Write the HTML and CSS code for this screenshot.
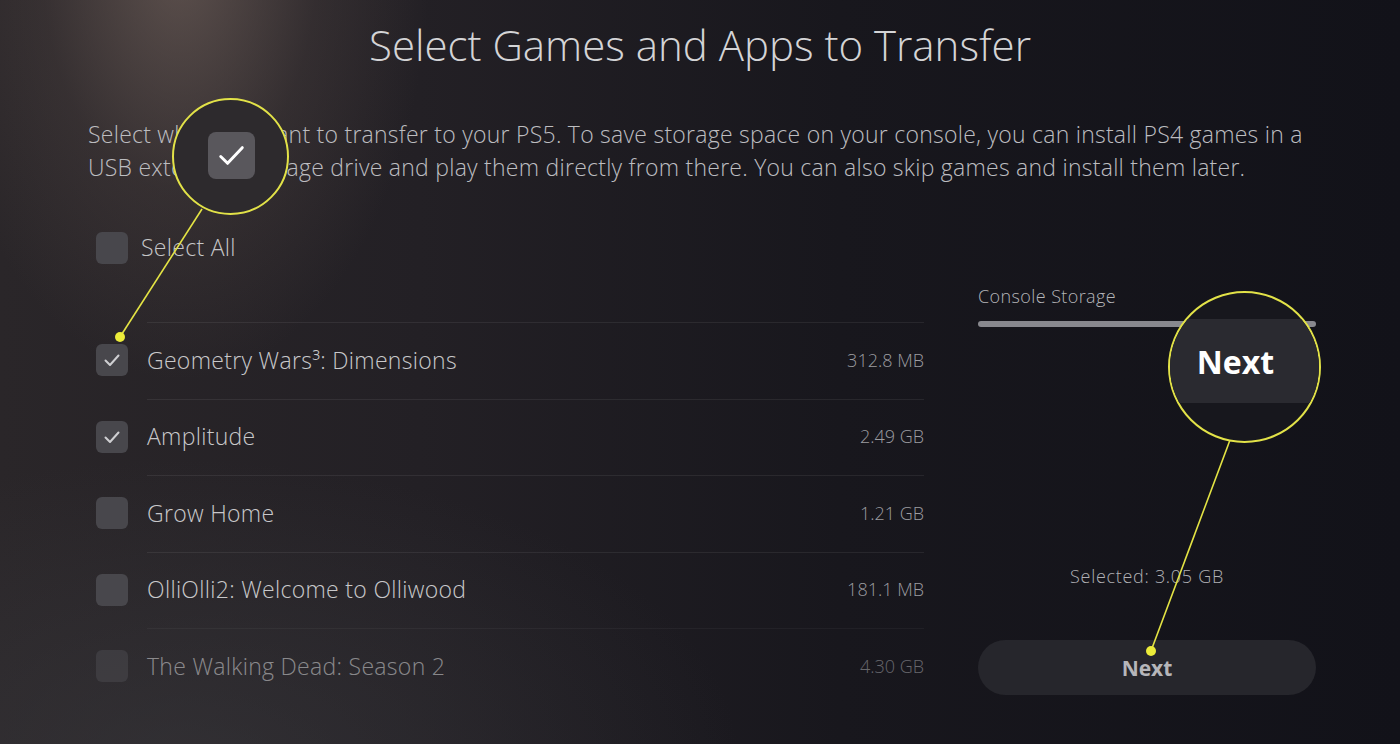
FILE: index.html
```html
<!DOCTYPE html>
<html lang="en">
<head>
    <meta charset="UTF-8">
    <title>Select Games and Apps to Transfer</title>
    <link rel="stylesheet" href="styles.css">
</head>
<body>
    <div class="screen">
        <h1 class="title">Select Games and Apps to Transfer</h1>
        <p class="intro">Select what you want to transfer to your PS5. To save storage space on your console, you can install PS4 games in a<br>USB extended storage drive and play them directly from there. You can also skip games and install them later.</p>

        <div class="content">
            <div class="games">
                <div class="select-all">
                    <span class="box"></span>
                    <span>Select All</span>
                </div>

                <ul class="game-list">
                    <li class="game">
                        <span class="box"><svg viewBox="0 0 32 32"><polyline points="9.5,16.5 14,21 22.5,11.5"/></svg></span>
                        <div class="game-body">
                            <span class="name">Geometry Wars³: Dimensions</span>
                            <span class="size">312.8 MB</span>
                        </div>
                    </li>
                    <li class="game">
                        <span class="box"><svg viewBox="0 0 32 32"><polyline points="9.5,16.5 14,21 22.5,11.5"/></svg></span>
                        <div class="game-body">
                            <span class="name">Amplitude</span>
                            <span class="size">2.49 GB</span>
                        </div>
                    </li>
                    <li class="game">
                        <span class="box"></span>
                        <div class="game-body">
                            <span class="name">Grow Home</span>
                            <span class="size">1.21 GB</span>
                        </div>
                    </li>
                    <li class="game">
                        <span class="box"></span>
                        <div class="game-body">
                            <span class="name">OlliOlli2: Welcome to Olliwood</span>
                            <span class="size">181.1 MB</span>
                        </div>
                    </li>
                    <li class="game faded">
                        <span class="box"></span>
                        <div class="game-body">
                            <span class="name">The Walking Dead: Season 2</span>
                            <span class="size">4.30 GB</span>
                        </div>
                    </li>
                </ul>
            </div>

            <aside class="storage">
                <div class="storage-label">Console Storage</div>
                <div class="storage-bar"></div>
                <div class="selected">Selected: 3.05 GB</div>
                <button class="next-btn">Next</button>
            </aside>
        </div>

        <!-- callout pointers -->
        <svg class="pointers" viewBox="0 0 1400 744">
            <line x1="202" y1="209" x2="120" y2="337"/>
            <circle cx="120" cy="337" r="5"/>
            <line x1="1230" y1="440" x2="1151" y2="651"/>
            <circle cx="1151" cy="651" r="5"/>
        </svg>

        <div class="callout callout-check">
            <span class="big-box"><svg viewBox="0 0 48 48"><polyline points="13,25 20,32 35,16"/></svg></span>
        </div>

        <div class="callout callout-next">
            <div class="big-btn">Next</div>
        </div>
    </div>
</body>
</html>
```

FILE: styles.css
```css
* {
    margin: 0;
    padding: 0;
    box-sizing: border-box;
}

body {
    background: #141419;
    font-family: 'Open Sans', 'Liberation Sans', sans-serif;
    overflow: hidden;
}

.screen {
    width: 1400px;
    height: 744px;
    position: relative;
    overflow: hidden;
    color: #c4c4c6;
    background:
        radial-gradient(ellipse 250px 420px at 180px -40px, rgba(128, 110, 102, 0.6), rgba(96, 82, 78, 0.25) 55%, rgba(0, 0, 0, 0) 100%),
        radial-gradient(ellipse 560px 300px at 180px 760px, rgba(62, 62, 66, 0.45), rgba(0, 0, 0, 0) 100%),
        linear-gradient(90deg, #2a2629 0%, #232025 30%, #18171d 60%, #121219 100%);
}

.title {
    padding-top: 21px;
    text-align: center;
    font-size: 42px;
    line-height: 48px;
    font-weight: 300;
    color: #d4d4d6;
}

.intro {
    margin: 49px 0 0 88px;
    font-size: 23px;
    line-height: 33px;
    font-weight: 300;
    letter-spacing: 0.25px;
    color: #bdbdc0;
    white-space: nowrap;
}

.content {
    display: grid;
    grid-template-columns: 828px 338px;
    column-gap: 54px;
    padding-left: 96px;
    margin-top: 48px;
}

.box {
    width: 32px;
    height: 32px;
    flex: none;
    border-radius: 6px;
    background: #48474c;
    display: flex;
}

.box svg {
    width: 32px;
    height: 32px;
    fill: none;
    stroke: #cfcfd2;
    stroke-width: 2;
    stroke-linecap: round;
    stroke-linejoin: round;
}

.select-all {
    display: flex;
    align-items: center;
    gap: 13px;
    height: 32px;
    padding-bottom: 3px;
    font-size: 23px;
    font-weight: 300;
    letter-spacing: 0.3px;
    color: #c6c6c8;
}

.select-all .box {
    margin-top: 3px;
}

.game-list {
    list-style: none;
    margin-top: 58px;
}

.game {
    display: flex;
    align-items: center;
    gap: 19px;
}

.game-body {
    flex: 1;
    height: 76.5px;
    padding-bottom: 2px;
    border-top: 1px solid rgba(255, 255, 255, 0.07);
    display: flex;
    align-items: center;
    justify-content: space-between;
}

.name {
    font-size: 23px;
    font-weight: 300;
    letter-spacing: 0.3px;
    color: #c8c8ca;
}

.size {
    font-size: 18px;
    font-weight: 300;
    color: #9c9ca0;
}

.faded {
    opacity: 0.6;
}

.storage {
    display: flex;
    flex-direction: column;
}

.storage-label {
    margin-top: 52px;
    font-size: 18px;
    line-height: 24px;
    font-weight: 300;
    letter-spacing: 0.4px;
    color: #b4b4b8;
}

.storage-bar {
    margin-top: 13px;
    height: 6px;
    border-radius: 3px;
    background: #88888e;
}

.selected {
    margin-top: 237px;
    text-align: center;
    font-size: 18px;
    line-height: 24px;
    font-weight: 300;
    letter-spacing: 0.7px;
    color: #b0b0b4;
}

.next-btn {
    margin-top: 52px;
    height: 55px;
    border: none;
    border-radius: 28px;
    background: #26262c;
    color: #b6b6ba;
    font-family: 'Open Sans', 'Liberation Sans', sans-serif;
    font-size: 21px;
    font-weight: 700;
}

/* annotation layer */
.pointers {
    position: absolute;
    left: 0;
    top: 0;
    width: 1400px;
    height: 744px;
}

.pointers line {
    stroke: #e4e444;
    stroke-width: 1.6;
}

.pointers circle {
    fill: #ecec3a;
}

.callout {
    position: absolute;
    border-radius: 50%;
    border: 2.5px solid #e2e248;
    overflow: hidden;
    display: flex;
    align-items: center;
    justify-content: center;
}

.callout-check {
    left: 172px;
    top: 98px;
    width: 117px;
    height: 117px;
    background: #2d2a2d;
}

.big-box {
    width: 47px;
    height: 47px;
    border-radius: 8px;
    background: #59575c;
    display: flex;
    margin-left: 1px;
    margin-top: -2px;
}

.big-box svg {
    width: 47px;
    height: 47px;
    fill: none;
    stroke: #ffffff;
    stroke-width: 3;
    stroke-linecap: round;
    stroke-linejoin: round;
}

.callout-next {
    left: 1168px;
    top: 291px;
    width: 153px;
    height: 152px;
    background: #17171d;
    justify-content: flex-start;
}

.big-btn {
    width: 160px;
    height: 84px;
    margin-top: -12px;
    background: #2a2a30;
    color: #ffffff;
    font-size: 32px;
    font-weight: 700;
    display: flex;
    align-items: center;
    justify-content: center;
    padding-right: 18px;
}
```
